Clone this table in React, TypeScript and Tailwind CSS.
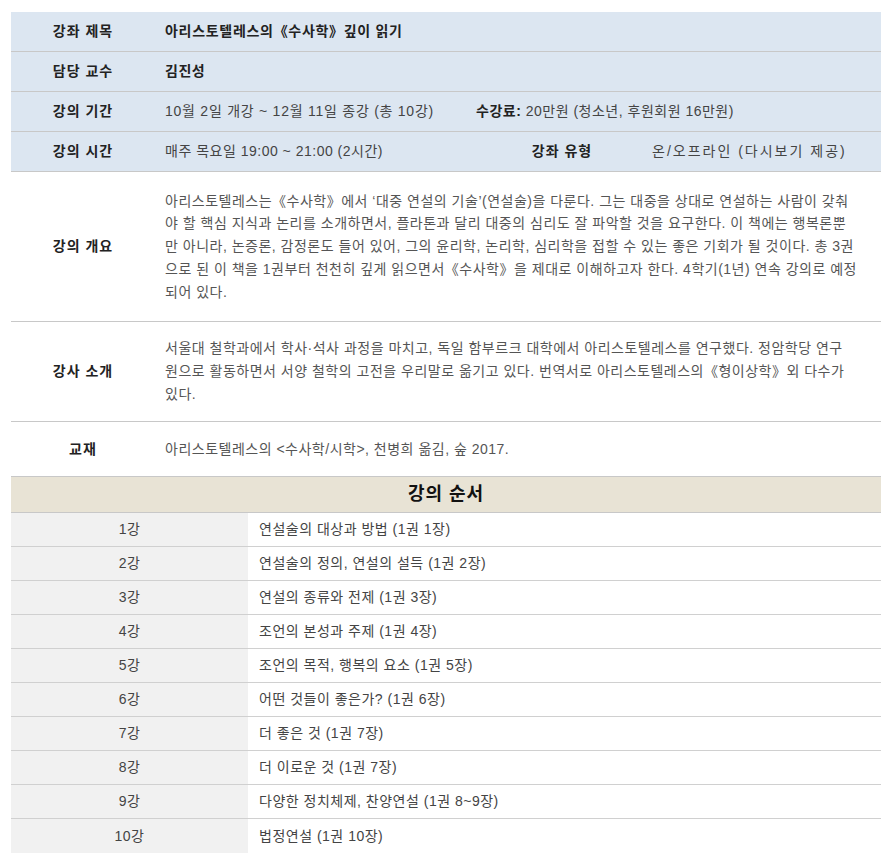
const FONT = { fontFamily: '"Liberation Sans", "Noto Sans CJK KR", sans-serif' };

const lectures = [
  ["1강", "연설술의 대상과 방법 (1권 1장)"],
  ["2강", "연설술의 정의, 연설의 설득 (1권 2장)"],
  ["3강", "연설의 종류와 전제 (1권 3장)"],
  ["4강", "조언의 본성과 주제 (1권 4장)"],
  ["5강", "조언의 목적, 행복의 요소 (1권 5장)"],
  ["6강", "어떤 것들이 좋은가? (1권 6장)"],
  ["7강", "더 좋은 것 (1권 7장)"],
  ["8강", "더 이로운 것 (1권 7장)"],
  ["9강", "다양한 정치체제, 찬양연설 (1권 8~9장)"],
  ["10강", "법정연설 (1권 10장)"],
];

const overview = [
  "아리스토텔레스는《수사학》에서 ‘대중 연설의 기술’(연설술)을 다룬다. 그는 대중을 상대로 연설하는 사람이 갖춰",
  "야 할 핵심 지식과 논리를 소개하면서, 플라톤과 달리 대중의 심리도 잘 파악할 것을 요구한다. 이 책에는 행복론뿐",
  "만 아니라, 논증론, 감정론도 들어 있어, 그의 윤리학, 논리학, 심리학을 접할 수 있는 좋은 기회가 될 것이다. 총 3권",
  "으로 된 이 책을 1권부터 천천히 깊게 읽으면서《수사학》을 제대로 이해하고자 한다. 4학기(1년) 연속 강의로 예정",
  "되어 있다.",
];

const teacher = [
  "서울대 철학과에서 학사·석사 과정을 마치고, 독일 함부르크 대학에서 아리스토텔레스를 연구했다. 정암학당 연구",
  "원으로 활동하면서 서양 철학의 고전을 우리말로 옮기고 있다. 번역서로 아리스토텔레스의《형이상학》외 다수가",
  "있다.",
];

function Label({ children }: { children: React.ReactNode }) {
  return <div className="flex items-center justify-center font-bold text-[#222] tracking-[1px]">{children}</div>;
}

function Lines({ lines }: { lines: string[] }) {
  return (
    <div className="self-center pl-[10px] leading-[22.75px] text-[#555] whitespace-nowrap">
      {lines.map((l) => (
        <div key={l}>{l}</div>
      ))}
    </div>
  );
}

export default function App() {
  return (
    <div className="bg-white min-h-[865px] px-[11px] pt-3 text-[14px] tracking-[0.5px] text-[#444]" style={FONT}>
      {/* 기본 정보 */}
      <div className="bg-[#dce6f1]">
        <div className="grid grid-cols-[144px_311px_176px_1fr] h-10 border-b border-[#c8c8c8]">
          <Label>강좌 제목</Label>
          <div className="col-span-3 flex items-center pl-[10px] font-bold text-[#222] tracking-[0.7px]">
            아리스토텔레스의《수사학》깊이 읽기
          </div>
        </div>
        <div className="grid grid-cols-[144px_311px_176px_1fr] h-10 border-b border-[#c8c8c8]">
          <Label>담당 교수</Label>
          <div className="col-span-3 flex items-center pl-[10px] font-bold text-[#222]">김진성</div>
        </div>
        <div className="grid grid-cols-[144px_311px_176px_1fr] h-10 border-b border-[#c8c8c8]">
          <Label>강의 기간</Label>
          <div className="flex items-center pl-[10px] whitespace-nowrap tracking-[0.75px]">
            10월 2일 개강 ~ 12월 11일 종강 (총 10강)
          </div>
          <div className="col-span-2 flex items-center pl-[10px]">
            <b className="text-[#222]">수강료:</b>&nbsp;20만원 (청소년, 후원회원 16만원)
          </div>
        </div>
        <div className="grid grid-cols-[144px_311px_176px_1fr] h-10 border-b border-[#c8c8c8]">
          <Label>강의 시간</Label>
          <div className="flex items-center pl-[10px]">매주 목요일 19:00 ~ 21:00 (2시간)</div>
          <div className="flex items-center justify-center pl-4 font-bold text-[#222] tracking-[1px]">강좌 유형</div>
          <div className="flex items-center pl-[10px] tracking-[2px]">온/오프라인 (다시보기 제공)</div>
        </div>
      </div>

      {/* 개요 */}
      <div className="grid grid-cols-[144px_1fr] h-[150px] border-b border-[#c8c8c8]">
        <Label>강의 개요</Label>
        <Lines lines={overview} />
      </div>
      <div className="grid grid-cols-[144px_1fr] h-[100px] border-b border-[#c8c8c8]">
        <Label>강사 소개</Label>
        <Lines lines={teacher} />
      </div>
      <div className="grid grid-cols-[144px_1fr] h-[55px] border-b border-[#c8c8c8]">
        <Label>교재</Label>
        <div className="flex items-center pl-[10px] text-[#555]">아리스토텔레스의 &lt;수사학/시학&gt;, 천병희 옮김, 숲 2017.</div>
      </div>

      {/* 강의 순서 */}
      <div className="h-9 flex items-center justify-center bg-[#e8e3d5] border-b border-[#c8c8c8] text-[18px] font-bold text-[#111] tracking-[1px]">
        강의 순서
      </div>
      {lectures.map(([no, title], i) => (
        <div
          key={no}
          className={`grid grid-cols-[237px_1fr] h-[34px] ${i < lectures.length - 1 ? "border-b border-[#d0d0d0]" : ""}`}
        >
          <div className="flex items-center justify-center bg-[#f1f1f1]">{no}</div>
          <div className="flex items-center pl-[11px]">{title}</div>
        </div>
      ))}
    </div>
  );
}
